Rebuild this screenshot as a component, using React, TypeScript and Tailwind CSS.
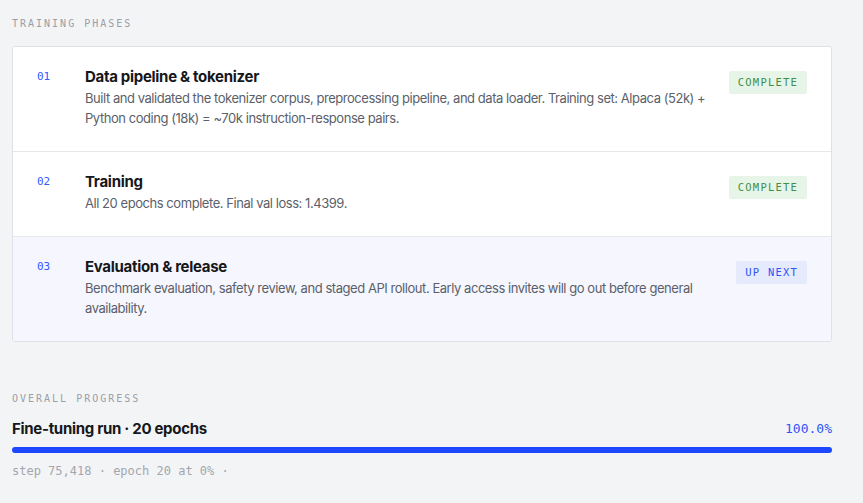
type Phase = {
  num: string;
  title: string;
  desc: string;
  status: "complete" | "next";
};

const phases: Phase[] = [
  {
    num: "01",
    title: "Data pipeline & tokenizer",
    desc: "Built and validated the tokenizer corpus, preprocessing pipeline, and data loader. Training set: Alpaca (52k) + Python coding (18k) = ~70k instruction-response pairs.",
    status: "complete",
  },
  {
    num: "02",
    title: "Training",
    desc: "All 20 epochs complete. Final val loss: 1.4399.",
    status: "complete",
  },
  {
    num: "03",
    title: "Evaluation & release",
    desc: "Benchmark evaluation, safety review, and staged API rollout. Early access invites will go out before general availability.",
    status: "next",
  },
];

const Badge = ({ status }: { status: Phase["status"] }) => {
  if (status === "complete") {
    return (
      <span className="shrink-0 rounded-[2px] bg-[#e7f5e8] px-[9px] h-[23px] flex items-center font-['DejaVu_Sans_Mono',monospace] text-[10.5px] tracking-[1.2px] text-[#3f8f45]">
        COMPLETE
      </span>
    );
  }
  return (
    <span className="shrink-0 rounded-[2px] bg-[#e5eafd] px-[9px] h-[23px] flex items-center font-['DejaVu_Sans_Mono',monospace] text-[10.5px] tracking-[1.2px] text-[#2f55f5]">
      UP NEXT
    </span>
  );
};

const PhaseRow = ({ phase, last }: { phase: Phase; last: boolean }) => (
  <div
    className={
      last
        ? "flex items-start px-6 pt-5 pb-[23px] bg-[#f5f6fe]"
        : "flex items-start px-6 pt-5 pb-[23px] bg-white border-b border-[#e7e8ec]"
    }
  >
    <div className="w-12 shrink-0 pt-[3px] font-['DejaVu_Sans_Mono',monospace] text-[11px] leading-[14px] text-[#3358ff]">
      {phase.num}
    </div>
    <div className="flex-1 min-w-0 font-['Inter',sans-serif]">
      <div className="text-[15px] leading-5 font-bold text-[#16171a] tracking-[-0.3px]">
        {phase.title}
      </div>
      <div className="mt-px text-[13px] leading-5 text-[#5b5f6a] tracking-[-0.45px]">
        {phase.desc}
      </div>
    </div>
    <div className="pl-5 pt-1">
      <Badge status={phase.status} />
    </div>
  </div>
);

export default function App() {
  return (
    <div className="min-h-[503px] w-full bg-[#f3f4f6] pl-3 pr-[31px] pt-[18px]">
      <div className="font-['DejaVu_Sans_Mono',monospace] text-[10px] leading-3 tracking-[2px] text-[#9b9ea6]">
        TRAINING PHASES
      </div>
      <div className="mt-4 rounded-[3px] border border-[#dfe1e6] overflow-hidden">
        {phases.map((p, i) => (
          <PhaseRow key={p.num} phase={p} last={i === phases.length - 1} />
        ))}
      </div>

      <div className="mt-[51px] font-['DejaVu_Sans_Mono',monospace] text-[10px] leading-3 tracking-[2px] text-[#9b9ea6]">
        OVERALL PROGRESS
      </div>
      <div className="mt-[14px] flex items-center justify-between">
        <div className="font-['Inter',sans-serif] text-[15px] leading-5 font-bold text-[#16171a] tracking-[-0.3px]">
          Fine-tuning run · 20 epochs
        </div>
        <div className="font-['DejaVu_Sans_Mono',monospace] text-[13px] leading-5 text-[#2f55f5]">
          100.0%
        </div>
      </div>
      <div className="mt-2 h-[6px] w-full rounded-full bg-[#e3e6ee]">
        <div className="h-full rounded-full bg-[#1d46ff]" style={{ width: "100%" }} />
      </div>
      <div className="mt-[10px] font-['DejaVu_Sans_Mono',monospace] text-[12px] leading-4 text-[#a3a6ad]">
        step 75,418 · epoch 20 at 0% ·
      </div>
    </div>
  );
}
